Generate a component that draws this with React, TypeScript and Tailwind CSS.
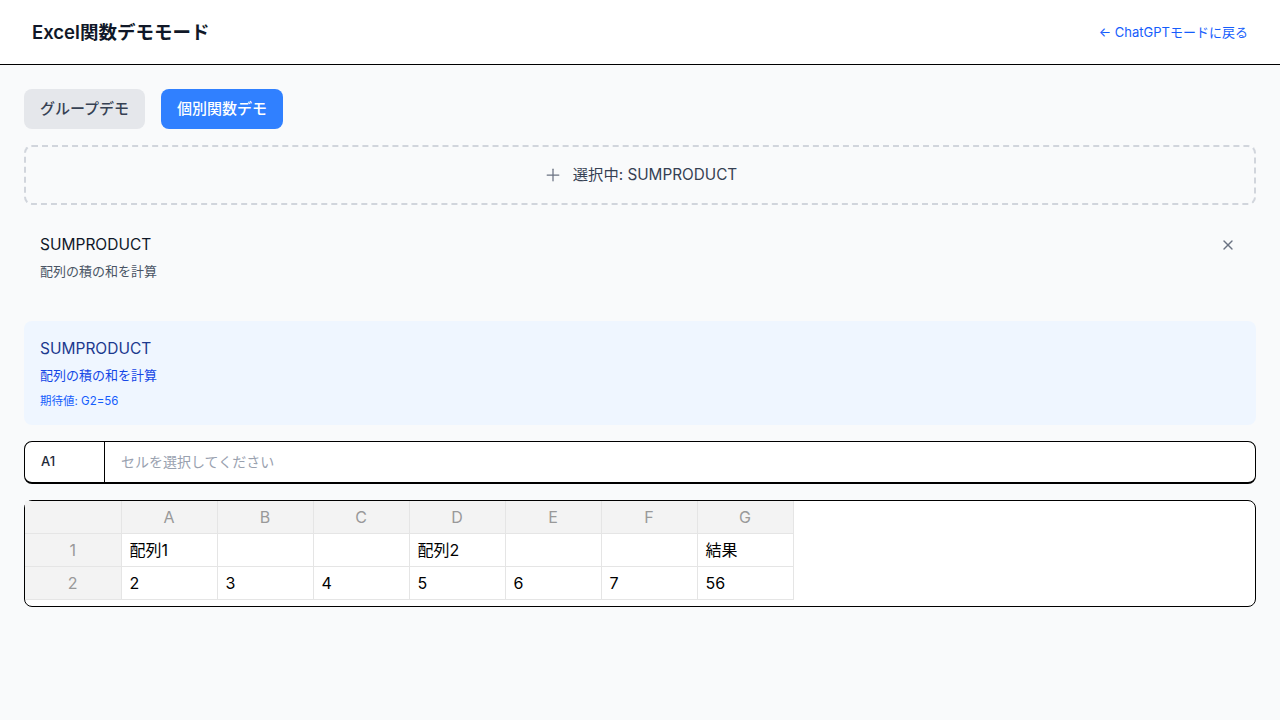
import { Plus, X } from "lucide-react";

const COLS = ["A", "B", "C", "D", "E", "F", "G"];
const ROWS: string[][] = [
  ["配列1", "", "", "配列2", "", "", "結果"],
  ["2", "3", "4", "5", "6", "7", "56"],
];

const font = { fontFamily: 'Inter, "Noto Sans CJK JP", sans-serif' };

export default function App() {
  return (
    <div className="min-h-[720px] bg-gray-50 text-gray-900" style={font}>
      <header className="flex h-[65px] items-center justify-between border-b border-black bg-white px-8">
        <h1 className="text-[18.5px] leading-7 font-semibold text-gray-900">Excel関数デモモード</h1>
        <a href="#" className="text-[13px] leading-5 text-blue-600">
          ← ChatGPTモードに戻る
        </a>
      </header>

      <main className="px-6 pt-6">
        <div className="flex gap-4">
          <button className="h-10 rounded-lg bg-gray-200 px-4 text-[15px] font-medium text-gray-700">
            グループデモ
          </button>
          <button className="h-10 rounded-lg bg-[#3080ff] px-4 text-[15px] font-medium text-white">
            個別関数デモ
          </button>
        </div>

        <div className="mt-4 flex h-[60px] items-center justify-center gap-2.5 rounded-lg border-2 border-dashed border-gray-300 text-gray-700">
          <Plus className="h-5 w-5 text-gray-500" strokeWidth={1.5} />
          <span className="text-[15.3px] leading-6">選択中: SUMPRODUCT</span>
        </div>

        <div className="mt-4 flex items-start justify-between pt-3 pb-2 pl-4 pr-5">
          <div>
            <div className="text-[15.5px] leading-6 text-gray-900">SUMPRODUCT</div>
            <div className="mt-1 text-[13px] leading-5 text-gray-600">配列の積の和を計算</div>
          </div>
          <X className="mt-1 h-4 w-4 text-gray-500" />
        </div>

        <div className="mt-8 rounded-lg bg-blue-50 p-4">
          <div className="text-[15.5px] leading-6 text-blue-900">SUMPRODUCT</div>
          <div className="mt-1 text-[13px] leading-5 text-blue-700">配列の積の和を計算</div>
          <div className="mt-2 text-[11.5px] leading-4 text-blue-600">期待値: G2=56</div>
        </div>

        <div className="mt-4 flex h-[43px] overflow-hidden rounded-lg border border-b-2 border-black bg-white">
          <div className="flex w-20 items-center border-r border-black px-4 text-[13px] font-medium text-gray-800">
            A1
          </div>
          <div className="flex flex-1 items-center px-4 text-sm text-gray-400">セルを選択してください</div>
        </div>

        <div className="mt-4 rounded-lg border border-black bg-white pb-1.5">
          <table className="border-collapse text-base">
            <thead>
              <tr className="h-[32.5px] bg-[#f3f3f3]">
                <th className="w-24 border-r border-b border-[#e5e5e5] font-normal" />
                {COLS.map((c) => (
                  <th key={c} className="w-24 border border-t-0 border-[#e5e5e5] font-normal text-[#999]">
                    {c}
                  </th>
                ))}
              </tr>
            </thead>
            <tbody>
              {ROWS.map((row, i) => (
                <tr key={i} className="h-[33px]">
                  <td className="border-r border-b border-[#e5e5e5] bg-[#f3f3f3] text-center text-[#999]">{i + 1}</td>
                  {row.map((v, j) => (
                    <td key={j} className="border border-[#e5e5e5] px-2 text-black">
                      {v}
                    </td>
                  ))}
                </tr>
              ))}
            </tbody>
          </table>
        </div>
      </main>
    </div>
  );
}
